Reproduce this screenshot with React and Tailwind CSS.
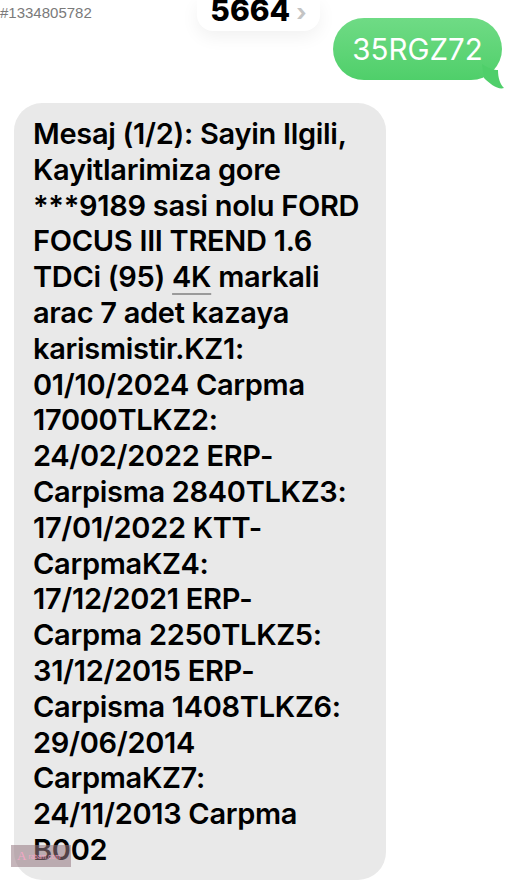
export default function App() {
  const lines = [
    'Mesaj (1/2): Sayin Ilgili,',
    'Kayitlarimiza gore',
    '***9189 sasi nolu FORD',
    'FOCUS III TREND 1.6',
    null,
    'arac 7 adet kazaya',
    'karismistir.KZ1:',
    '01/10/2024 Carpma',
    '17000TLKZ2:',
    '24/02/2022 ERP-',
    'Carpisma 2840TLKZ3:',
    '17/01/2022 KTT-',
    'CarpmaKZ4:',
    '17/12/2021 ERP-',
    'Carpma 2250TLKZ5:',
    '31/12/2015 ERP-',
    'Carpisma 1408TLKZ6:',
    '29/06/2014',
    'CarpmaKZ7:',
    '24/11/2013 Carpma',
    'B002',
  ];

  return (
    <div className="relative w-[525px] h-[891px] bg-white overflow-hidden" style={{ fontFamily: 'Inter, "Liberation Sans", sans-serif' }}>
      {/* header */}
      <div className="relative h-[100px]">
        <div className="absolute left-0 top-[2px] text-[15px] text-[#7a7a7a]" style={{ fontFamily: '"Liberation Sans", Arial, sans-serif' }}>
          #1334805782
        </div>
        <div className="absolute left-[197px] top-0 w-[123px] h-[31px] bg-white rounded-b-[16px] shadow-[0_6px_18px_rgba(0,0,0,0.06)] flex items-end justify-center pb-[6px]">
          <span className="text-[30px] leading-[29px] font-extrabold text-black -mt-[10px]">5664</span>
          <span className="ml-[6px] text-[24px] leading-[24px] text-[#c4c4c4] font-bold">›</span>
        </div>
        <div className="absolute left-[333px] top-[18px]">
          <div className="relative h-[62px] w-[169px] rounded-full bg-gradient-to-b from-[#6fdb85] to-[#4fcf6a] flex items-center justify-center">
            <span className="text-white text-[29.5px] font-normal">35RGZ72</span>
            <svg className="absolute right-[-6px] bottom-[-10px]" width="30" height="26" viewBox="0 0 30 26">
              <path d="M4 0 C10 4 16 6 20 6 C20 14 22 20 26 24 C20 26 12 20 6 14 Z" fill="#4fcf6a" />
            </svg>
          </div>
        </div>
      </div>

      {/* gray bubble */}
      <div className="ml-[14px] mt-[3px] w-[372px] h-[777px] rounded-[28px] bg-[#e9e9e9] pl-[19px] pt-[13px]">
        <div className="text-[29px] leading-[35.8px] font-semibold text-black tracking-[-0.3px]">
          {lines.map((l, i) =>
            l === null ? (
              <div key={i} className="whitespace-nowrap">
                TDCi (95){' '}
                <span className="underline decoration-[#9a9a9a] decoration-[2px] underline-offset-[6px]">4K</span>{' '}
                markali
              </div>
            ) : (
              <div key={i} className="whitespace-nowrap">{l}</div>
            )
          )}
        </div>
      </div>

      {/* watermark */}
      <div className="absolute left-[11px] top-[845px] w-[60px] h-[22px] bg-[rgba(150,120,130,0.55)] flex items-center pl-[6px]">
        <span className="text-[13px] text-[#f3a7c6]" style={{ fontFamily: '"Liberation Serif", serif' }}>A</span>
        <span className="text-[6px] text-[#f3a7c6] ml-[2px]">rabam.com</span>
      </div>
    </div>
  );
}
